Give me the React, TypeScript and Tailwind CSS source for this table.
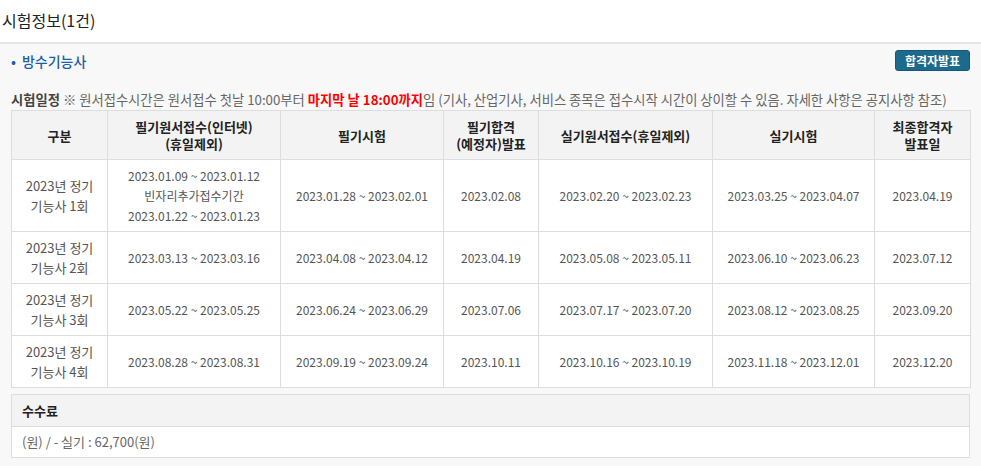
import React from 'react';

const rows = [
  {
    name: ['2023년 정기', '기능사 1회'],
    docApply: ['2023.01.09 ~ 2023.01.12', '빈자리추가접수기간', '2023.01.22 ~ 2023.01.23'],
    docExam: '2023.01.28 ~ 2023.02.01',
    docPass: '2023.02.08',
    pracApply: '2023.02.20 ~ 2023.02.23',
    pracExam: '2023.03.25 ~ 2023.04.07',
    final: '2023.04.19',
    h: 'h-[72px]',
  },
  {
    name: ['2023년 정기', '기능사 2회'],
    docApply: ['2023.03.13 ~ 2023.03.16'],
    docExam: '2023.04.08 ~ 2023.04.12',
    docPass: '2023.04.19',
    pracApply: '2023.05.08 ~ 2023.05.11',
    pracExam: '2023.06.10 ~ 2023.06.23',
    final: '2023.07.12',
    h: 'h-[52px]',
  },
  {
    name: ['2023년 정기', '기능사 3회'],
    docApply: ['2023.05.22 ~ 2023.05.25'],
    docExam: '2023.06.24 ~ 2023.06.29',
    docPass: '2023.07.06',
    pracApply: '2023.07.17 ~ 2023.07.20',
    pracExam: '2023.08.12 ~ 2023.08.25',
    final: '2023.09.20',
    h: 'h-[52px]',
  },
  {
    name: ['2023년 정기', '기능사 4회'],
    docApply: ['2023.08.28 ~ 2023.08.31'],
    docExam: '2023.09.19 ~ 2023.09.24',
    docPass: '2023.10.11',
    pracApply: '2023.10.16 ~ 2023.10.19',
    pracExam: '2023.11.18 ~ 2023.12.01',
    final: '2023.12.20',
    h: 'h-[52px]',
  },
];

const th = 'border border-[#dddddd] font-bold text-[13px] leading-[17px] text-[#222] align-middle text-center';
const td = 'border border-[#dddddd] text-[12px] leading-[20px] text-[#555] align-middle text-center bg-white';

const App: React.FC = () => {
  return (
    <div className="w-[981px] h-[466px] overflow-hidden bg-white font-['Noto_Sans_CJK_KR','Noto_Sans',sans-serif]">
      {/* title */}
      <div className="h-[42px] pl-[2px] pt-[9px] text-[16px] leading-[22px] text-[#222]">시험정보(1건)</div>

      <div className="border-t-2 border-[#e5e5e5] bg-[#f8f8f8] h-[424px] pl-[11px] pr-[11px]">
        {/* subject + button */}
        <div className="flex items-center justify-between pt-[6px] h-[27px]">
          <div className="text-[14px] leading-[20px] text-[#1a5fa5] font-medium">
            <span className="mr-[6px]">•</span>방수기능사
          </div>
          <button className="h-[21px] w-[75px] rounded-[3px] bg-[#1d6a8c] border border-[#16587a] text-white text-[12px] font-bold leading-none">
            합격자발표
          </button>
        </div>

        {/* schedule note */}
        <div className="pt-[20px] h-[39px] text-[13.3px] leading-[18px] text-[#666] whitespace-nowrap">
          <span className="font-bold text-[#444]">시험일정</span> ※ 원서접수시간은 원서접수 첫날 10:00부터{' '}
          <span className="font-bold text-[#ff0000]">마지막 날 18:00까지</span>임 (기사, 산업기사, 서비스 종목은 접수시작 시간이 상이할 수 있음. 자세한 사항은 공지사항 참조)
        </div>

        {/* schedule table */}
        <table className="w-[959px] border-collapse table-fixed">
          <colgroup>
            <col className="w-[96px]" />
            <col className="w-[173px]" />
            <col className="w-[163px]" />
            <col className="w-[95px]" />
            <col className="w-[174px]" />
            <col className="w-[162px]" />
            <col className="w-[96px]" />
          </colgroup>
          <thead>
            <tr className="h-[49px] bg-[#f3f3f3]">
              <th className={th}>구분</th>
              <th className={th}>필기원서접수(인터넷)<br />(휴일제외)</th>
              <th className={th}>필기시험</th>
              <th className={th}>필기합격<br />(예정자)발표</th>
              <th className={th}>실기원서접수(휴일제외)</th>
              <th className={th}>실기시험</th>
              <th className={th}>최종합격자<br />발표일</th>
            </tr>
          </thead>
          <tbody>
            {rows.map((r, i) => (
              <tr key={i} className={r.h}>
                <td className={`${td} text-[13px]`}>
                  {r.name[0]}
                  <br />
                  {r.name[1]}
                </td>
                <td className={td}>
                  {r.docApply.map((l, j) => (
                    <div key={j}>{l}</div>
                  ))}
                </td>
                <td className={td}>{r.docExam}</td>
                <td className={td}>{r.docPass}</td>
                <td className={td}>{r.pracApply}</td>
                <td className={td}>{r.pracExam}</td>
                <td className={td}>{r.final}</td>
              </tr>
            ))}
          </tbody>
        </table>

        {/* fee */}
        <div className="mt-[6px] w-[959px] border border-[#dddddd]">
          <div className="h-[32px] bg-[#f3f3f3] border-b border-[#dddddd] pl-[10px] flex items-center text-[13px] font-bold text-[#222]">
            수수료
          </div>
          <div className="h-[30px] bg-white pl-[10px] flex items-center text-[13px] text-[#666]">
            (원) / - 실기 : 62,700(원)
          </div>
        </div>
      </div>
    </div>
  );
};

export default App;
